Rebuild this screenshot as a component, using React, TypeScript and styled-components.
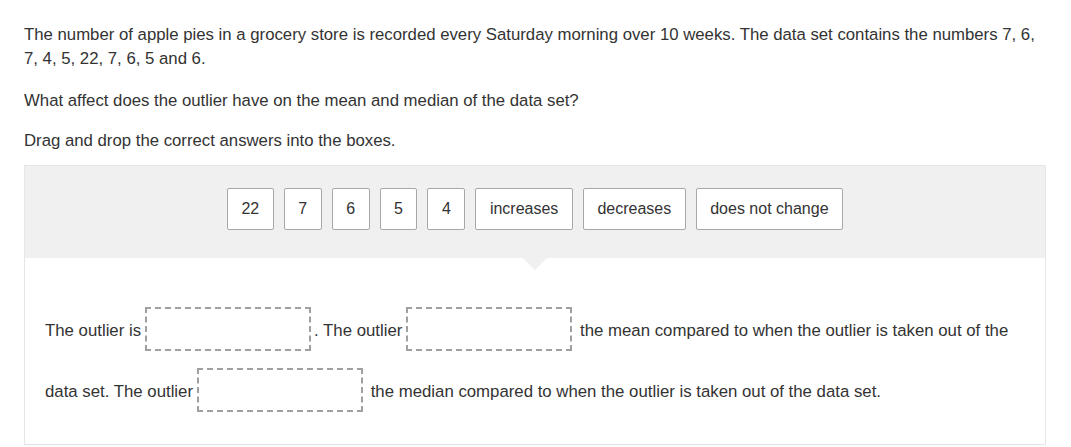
import React from "react";
import styled, { createGlobalStyle } from "styled-components";

const Global = createGlobalStyle`
  html, body { margin: 0; padding: 0; background: #fff; }
  body {
    font-family: "Liberation Sans", Arial, sans-serif;
    font-size: 16px;
    color: #333;
  }
`;

const Page = styled.div`
  padding: 23px 25px 0 24px;
`;

const Para = styled.p<{ $gap: number }>`
  margin: 0 0 ${(p) => p.$gap}px;
  font-size: 16.75px;
  line-height: 24px;
`;

const Task = styled.div`
  border: 1px solid #e6e6e6;
`;

const Bank = styled.div`
  position: relative;
  background: #f0f0f0;
  display: flex;
  justify-content: center;
  gap: 10px;
  padding: 22px 0 28px;

  &::after {
    content: "";
    position: absolute;
    left: 50%;
    bottom: -12px;
    margin-left: -12px;
    border-left: 12px solid transparent;
    border-right: 12px solid transparent;
    border-top: 12px solid #f0f0f0;
  }
`;

const Tile = styled.div`
  box-sizing: border-box;
  height: 42px;
  padding: 0 13.5px;
  display: flex;
  align-items: center;
  background: #fff;
  border: 1px solid #a8a8a8;
  border-radius: 2px;
  color: #333;
  font-size: 16px;
  white-space: nowrap;
`;

const Sentence = styled.div`
  padding: 42px 20px 22px 20px;
  font-size: 16.8px;
  line-height: 61px;
`;

const Drop = styled.span`
  display: inline-block;
  box-sizing: border-box;
  width: 166px;
  height: 44px;
  margin: 0 3px 5px 4px;
  vertical-align: middle;
  border: 2px dashed #a0a0a0;
`;

const tiles = ["22", "7", "6", "5", "4", "increases", "decreases", "does not change"];

export default function App() {
  return (
    <>
      <Global />
      <Page>
        <Para $gap={18}>
          The number of apple pies in a grocery store is recorded every Saturday morning over 10 weeks. The data set
          contains the numbers 7, 6, 7, 4, 5, 22, 7, 6, 5 and 6.
        </Para>
        <Para $gap={16}>What affect does the outlier have on the mean and median of the data set?</Para>
        <Para $gap={12}>Drag and drop the correct answers into the boxes.</Para>
        <Task>
          <Bank>
            {tiles.map((t) => (
              <Tile key={t}>{t}</Tile>
            ))}
          </Bank>
          <Sentence>
            The outlier is<Drop />. The outlier<Drop /> the mean compared to when the outlier is taken out of the data
            set. The outlier<Drop /> the median compared to when the outlier is taken out of the data set.
          </Sentence>
        </Task>
      </Page>
    </>
  );
}
